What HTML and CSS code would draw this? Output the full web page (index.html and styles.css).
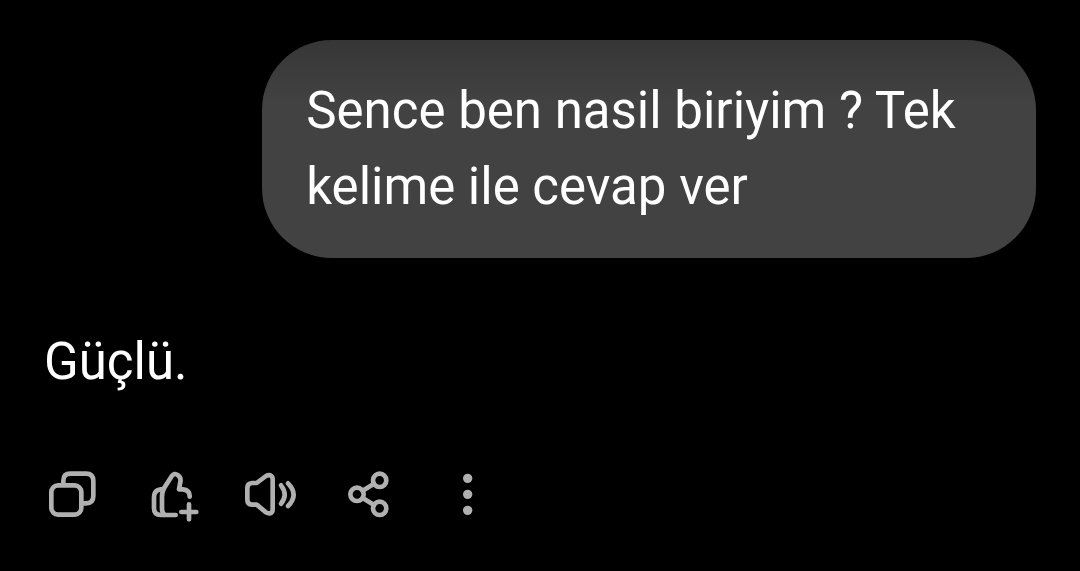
FILE: index.html
```html
<!DOCTYPE html>
<html lang="tr">
<head>
  <meta charset="UTF-8" />
  <meta name="viewport" content="width=device-width, initial-scale=1" />
  <title>Sohbet</title>
  <link rel="stylesheet" href="styles.css">
</head>
<body>
  <main class="chat">
    <p class="message user">Sence ben nasil biriyim ? Tek kelime ile cevap ver</p>
    <p class="message reply">Güçlü.</p>

    <div class="actions">
      <button type="button" aria-label="Kopyala">
        <svg viewBox="-6 0 210 210">
          <rect x="34" y="76" width="90" height="88" rx="20" />
          <path d="M70 70V62Q70 41 91 41H138Q160 41 160 63V108Q160 130 138 130H130" />
        </svg>
      </button>
      <button type="button" aria-label="Beğen">
        <svg viewBox="-9 0 210 210">
          <path d="M107 165H62Q42 165 42 145V112Q42 90 62 88H70L94 50Q103 37 113 45Q124 52 121 66L117 88H128Q150 90 149 110" />
          <path d="M70 90Q66 98 66 110V146Q66 158 73 164" />
          <path d="M147 133V178M124 156H169" />
        </svg>
      </button>
      <button type="button" aria-label="Sesli oku">
        <svg viewBox="0 0 210 210">
          <path d="M34 84Q34 70 48 69H62L90 48Q97 44 103 46Q110 49 110 58V148Q110 158 103 160Q96 161 90 157L62 134H48Q34 133 34 119Z" />
          <path d="M135 76Q157 104 135 131M156 70Q190 104 156 138" />
        </svg>
      </button>
      <button type="button" aria-label="Paylaş">
        <svg viewBox="-3 0 210 210">
          <circle cx="131" cy="61" r="20" />
          <circle cx="63" cy="103" r="20" />
          <circle cx="131" cy="145" r="20" />
          <path d="M80 92L114 71M80 114L114 135" />
        </svg>
      </button>
      <button type="button" aria-label="Diğer">
        <svg class="dots" viewBox="-4 0 210 210">
          <circle cx="97" cy="55" r="14" />
          <circle cx="97" cy="103" r="14" />
          <circle cx="97" cy="151" r="14" />
        </svg>
      </button>
    </div>
  </main>
</body>
</html>
```
FILE: styles.css
```css
body {
  margin: 0;
  background: #000;
  color: #fff;
  font-family: Roboto, sans-serif;
}
.chat {
  display: flex;
  flex-direction: column;
  padding: 40px 44px;
}
.message {
  margin: 0;
  font-size: 51px;
  line-height: 76px;
}
.user {
  align-self: flex-end;
  box-sizing: border-box;
  width: 78%;
  padding: 33px 44px;
  border-radius: 70px;
  background: linear-gradient(#363636, #424242 64px);
}
.reply {
  margin-top: 66px;
}
.actions {
  display: flex;
  gap: 29px;
  margin: 60px 0 0 -6px;
}
.actions button {
  width: 70px;
  height: 70px;
  padding: 0;
  border: none;
  background: none;
  color: #b0b0b0;
  cursor: pointer;
}
.actions svg {
  display: block;
  width: 100%;
  fill: none;
  stroke: currentColor;
  stroke-width: 14;
  stroke-linecap: round;
  stroke-linejoin: round;
}
.actions .dots {
  fill: currentColor;
  stroke: none;
}
```
